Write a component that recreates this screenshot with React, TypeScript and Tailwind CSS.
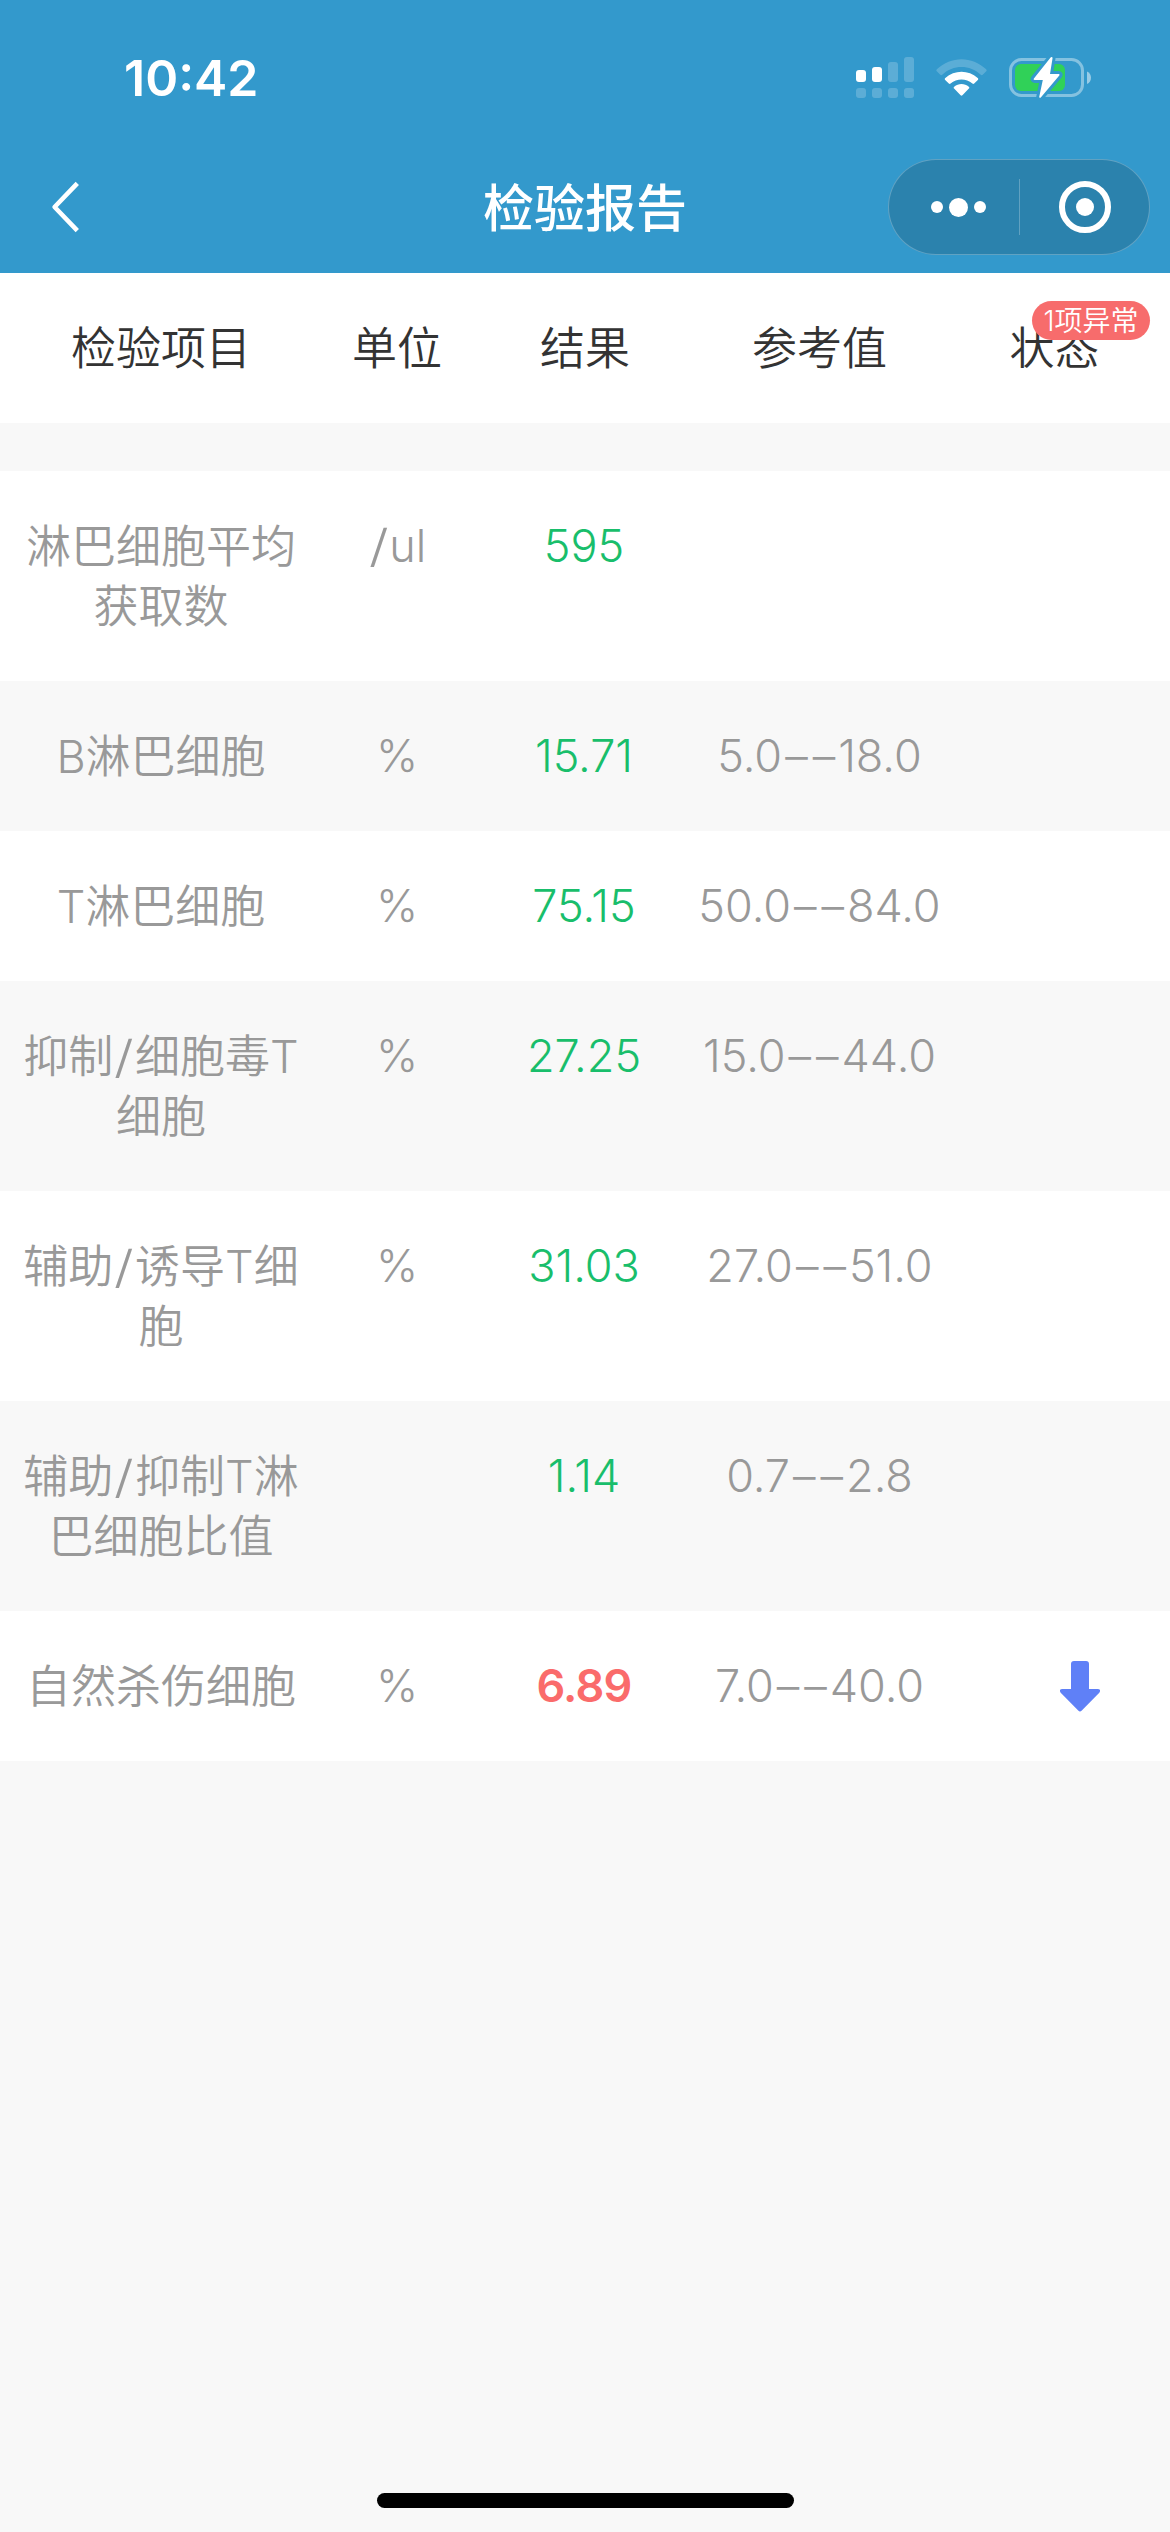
import { Fragment } from 'react';
import clsx from 'clsx';

type ReportItem = {
    name: string;
    unit: string;
    result: string;
    range?: [string, string];
    status?: 'low';
};

const columns = 'grid grid-cols-[292px_180px_194px_277px_193px] pl-[15px] pt-[46px] pb-[44px] text-[45px] leading-[60px] text-center font-[350]';

const items: ReportItem[] = [
    { name: '淋巴细胞平均获取数', unit: '/ul', result: '595' },
    { name: 'B淋巴细胞', unit: '%', result: '15.71', range: ['5.0', '18.0'] },
    { name: 'T淋巴细胞', unit: '%', result: '75.15', range: ['50.0', '84.0'] },
    { name: '抑制/细胞毒T细胞', unit: '%', result: '27.25', range: ['15.0', '44.0'] },
    { name: '辅助/诱导T细胞', unit: '%', result: '31.03', range: ['27.0', '51.0'] },
    { name: '辅助/抑制T淋巴细胞比值', unit: '', result: '1.14', range: ['0.7', '2.8'] },
    { name: '自然杀伤细胞', unit: '%', result: '6.89', range: ['7.0', '40.0'], status: 'low' },
];

function SignalIcon() {
    return (
        <svg width="58" height="42" viewBox="0 0 58 42" fill="white">
            <rect x="0" y="13" width="10" height="12" rx="3" />
            <rect x="16" y="10" width="10" height="15" rx="3" />
            <g opacity="0.2">
                <rect x="32" y="5" width="10" height="20" rx="3" />
                <rect x="48" y="0" width="10" height="25" rx="3" />
                <rect x="0" y="31" width="10" height="10" rx="3" />
                <rect x="16" y="31" width="10" height="10" rx="3" />
                <rect x="32" y="31" width="10" height="10" rx="3" />
                <rect x="48" y="31" width="10" height="10" rx="3" />
            </g>
        </svg>
    );
}

function WifiIcon() {
    return (
        <svg width="51" height="38" viewBox="0 0 51 38" fill="white">
            <path opacity="0.2" d="M.9 10.3C15-3.1 36-3.1 50.1 10.3c.7.7.7 1.4.1 2L46.7 15.7c-.6.6-1.3.6-1.9 0-11-10.3-27.6-10.3-38.6 0-.6.6-1.3.6-1.9 0L.8 12.3c-.6-.6-.6-1.3.1-2Z" />
            <path d="M9.3 19c9.3-8.3 23.1-8.3 32.4 0 .7.7.7 1.3.1 1.9l-3.6 3.6c-.6.6-1.2.6-1.8.1-6.2-5.4-15.6-5.4-21.8 0-.6.5-1.2.5-1.8-.1l-3.6-3.6c-.6-.6-.6-1.2.1-1.9Z" />
            <path d="M18.2 27.7c4.2-3.6 10.4-3.6 14.6 0 .7.7.7 1.3.1 1.9l-6.5 6.7c-.6.6-1.2.6-1.8 0l-6.5-6.7c-.6-.6-.6-1.2.1-1.9Z" />
        </svg>
    );
}

function BatteryIcon() {
    const bolt = 'M41.6.6 24.9 21.4c-.6.8-.2 1.5.7 1.5h8.2L30.3 39.5c-.3 1.3.9 1.8 1.7.8L50.3 18.5c.6-.8.2-1.5-.7-1.5H41L43.5 1.4c.2-1.3-1.1-1.8-1.9-.8Z';
    return (
        <svg width="83" height="42" viewBox="0 0 83 42">
            <rect x="1.5" y="2.5" width="72" height="36" rx="11" fill="none" stroke="white" strokeOpacity="0.4" strokeWidth="3" />
            <path d="M78 14.5c5.3 2 5.3 10.5 0 12.5Z" fill="white" fillOpacity="0.5" />
            <rect x="6" y="7" width="50" height="27" rx="6" fill="#30d158" />
            <path d={bolt} fill="#3399cc" stroke="#3399cc" strokeWidth="6" strokeLinejoin="round" />
            <path d={bolt} fill="white" />
        </svg>
    );
}

function StatusBar() {
    return (
        <div className="h-[141px] flex items-start justify-between pl-[124px] pr-[78px]">
            <div className="pt-[48px] text-[50px] leading-[60px] font-semibold">10:42</div>
            <div className="flex items-start pt-[57px]">
                <SignalIcon />
                <div className="ml-[22px] pt-[2px]">
                    <WifiIcon />
                </div>
                <div className="ml-[22px]">
                    <BatteryIcon />
                </div>
            </div>
        </div>
    );
}

function NavBar() {
    return (
        <div className="h-[132px] grid grid-cols-[282px_1fr_282px] items-center px-5">
            <svg className="ml-[30px]" width="32" height="54" viewBox="0 0 32 54" fill="none" stroke="white" strokeWidth="4.6">
                <path d="M27.3 3.3 4.6 27l22.7 23.7" strokeLinejoin="round" />
            </svg>
            <h1 className="pt-1 text-center text-[51px] leading-[60px] font-medium">检验报告</h1>
            {/* Mini program capsule */}
            <div className="justify-self-end w-[262px] h-[96px] rounded-full bg-black/15 border border-white/25 flex items-center">
                <div className="w-[130px] flex items-center justify-center gap-[6px] pl-[8px]">
                    <span className="w-3 h-3 rounded-full bg-white" />
                    <span className="w-[19px] h-[19px] rounded-full bg-white" />
                    <span className="w-3 h-3 rounded-full bg-white" />
                </div>
                <div className="w-px h-[56px] bg-white/25" />
                <div className="flex-1 flex justify-center">
                    <div className="w-[52px] h-[52px] rounded-full border-[6px] border-white flex items-center justify-center">
                        <span className="w-[18px] h-[18px] rounded-full bg-white" />
                    </div>
                </div>
            </div>
        </div>
    );
}

// Draws the slash a bit wider, with some room around it
function SlashText({ text }: { text: string }) {
    return text.split('/').map((part, i) => (
        <Fragment key={i}>
            {i > 0 && <span className="inline-block mx-[3px] scale-x-125">/</span>}
            {part}
        </Fragment>
    ));
}

function ReportRow({ item, striped }: { item: ReportItem; striped: boolean }) {
    return (
        <div className={clsx(columns, 'text-[#999999]', striped ? 'bg-[#f8f8f8]' : 'bg-white')}>
            <div className="px-[8px] break-all">
                <SlashText text={item.name} />
            </div>
            <div className="-mt-px">
                <SlashText text={item.unit} />
            </div>
            <div className={clsx('-mt-px', item.status ? 'text-[#fa6b6b] font-semibold tracking-[-0.8px]' : 'text-[#19be6b]')}>
                {item.result}
            </div>
            <div className="-mt-px whitespace-nowrap">
                {item.range && (
                    <>
                        {item.range[0]}
                        <span className="inline-block pl-[3px] tracking-[5px] -mr-[2px]">––</span>
                        {item.range[1]}
                    </>
                )}
            </div>
            <div className="-mt-[2px] flex items-center justify-center pl-[51px]">
                {item.status === 'low' && (
                    <svg width="40" height="51" viewBox="0 0 40 51" fill="#5f80f7">
                        <path d="M14 0h12q3 0 3 3v25h8.5q4 0 1.8 3.8L21.8 49.5q-1.8 2-3.6 0L.7 31.8Q-1.5 28 2.5 28H11V3q0-3 3-3Z" />
                    </svg>
                )}
            </div>
        </div>
    );
}

export default function App() {
    return (
        <div
            lang="zh-CN"
            className="w-[1170px] h-[2532px] flex flex-col overflow-hidden bg-[#f8f8f8] font-['Inter','Noto_Sans_CJK_SC',sans-serif]"
        >
            <header className="bg-[#3399cc] text-white">
                <StatusBar />
                <NavBar />
            </header>

            {/* Table head */}
            <div className={clsx(columns, 'relative bg-white text-[#333333]')}>
                <div>检验项目</div>
                <div>单位</div>
                <div className="pl-[2px]">结果</div>
                <div>参考值</div>
                <div>状态</div>
                <span className="absolute top-[28px] right-5 w-[118px] h-[39px] rounded-full bg-[#f76c6c] text-white text-[28px] leading-[40px]">
                    1项异常
                </span>
            </div>

            <main className="mt-[48px] flex-1">
                {items.map((item, i) => (
                    <ReportRow key={item.name} item={item} striped={i % 2 === 1} />
                ))}
            </main>

            {/* Home indicator */}
            <div className="mx-auto mb-[24px] w-[417px] h-[15px] rounded-full bg-black" />
        </div>
    );
}
